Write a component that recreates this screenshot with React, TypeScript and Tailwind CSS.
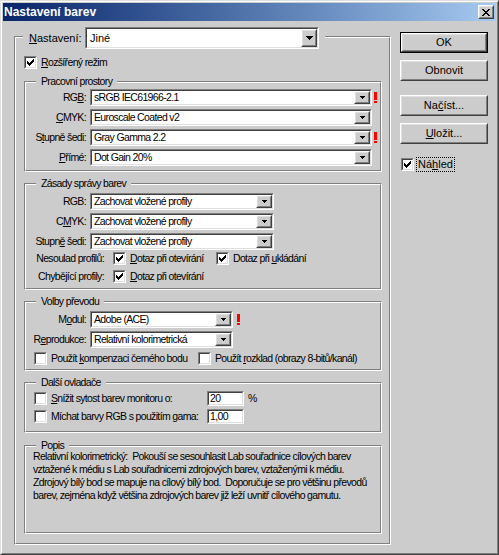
import React from "react";

const NF =
  "font-['Liberation_Sans',Arial,sans-serif] text-[10.5px] leading-[13px] tracking-[-0.65px] text-black";
const AF = "font-['Liberation_Sans',Arial,sans-serif] text-[11px] leading-[13px] text-black";

type P = { className?: string; children?: React.ReactNode };

function Raised({ className = "", children }: P) {
  return (
    <div
      className={`border border-t-white border-l-white border-b-[#404040] border-r-[#404040] bg-[#cccccc] shrink-0 ${className}`}
    >
      <div className="h-full w-full border border-t-[#dfdfdf] border-l-[#dfdfdf] border-b-[#808080] border-r-[#808080] flex items-center justify-center">
        {children}
      </div>
    </div>
  );
}

function Sunken({ className = "", children, inner = "" }: P & { inner?: string }) {
  return (
    <div
      className={`border border-t-[#808080] border-l-[#808080] border-b-white border-r-white shrink-0 ${className}`}
    >
      <div
        className={`h-full w-full border border-t-[#404040] border-l-[#404040] border-b-[#dfdfdf] border-r-[#dfdfdf] bg-white flex items-center ${inner}`}
      >
        {children}
      </div>
    </div>
  );
}

function ArrowSmall() {
  return (
    <svg width="5" height="3" viewBox="0 0 5 3" className="block">
      <path d="M0 0h5v1h-1v1h-1v1h-1v-1h-1v-1h-1z" fill="#000" />
    </svg>
  );
}

function ArrowBig() {
  return (
    <svg width="7" height="4" viewBox="0 0 7 4" className="block">
      <path d="M0 0h7v1h-1v1h-1v1h-1v1h-1v-1h-1v-1h-1v-1h-1z" fill="#000" />
    </svg>
  );
}

function CheckGlyph() {
  return (
    <svg width="7" height="7" viewBox="0 0 7 7" className="block">
      <path
        d="M6 0h1v1h-1z M5 1h2v1h-2z M0 2h1v1h-1z M4 2h3v1h-3z M0 3h2v1h-2z M3 3h3v1h-3z M0 4h5v1h-5z M1 5h3v1h-3z M2 6h1v1h-1z"
        fill="#000"
      />
    </svg>
  );
}

function CloseGlyph() {
  return (
    <svg width="8" height="7" viewBox="0 0 8 7" className="block">
      <path
        d="M0 0h2v1h-2z M6 0h2v1h-2z M1 1h2v1h-2z M5 1h2v1h-2z M2 2h4v1h-4z M3 3h2v1h-2z M2 4h4v1h-4z M1 5h2v1h-2z M5 5h2v1h-2z M0 6h2v1h-2z M6 6h2v1h-2z"
        fill="#000"
      />
    </svg>
  );
}

function Check({ checked = false }: { checked?: boolean }) {
  return (
    <Sunken className="w-[13px] h-[13px]" inner="justify-center">
      {checked && <CheckGlyph />}
    </Sunken>
  );
}

function Combo({ className = "", text }: { className?: string; text: string }) {
  return (
    <Sunken className={className}>
      <div className={`${NF} flex-1 pl-[2px] whitespace-nowrap overflow-hidden`}>{text}</div>
      <Raised className="w-[16px] h-full">
        <ArrowSmall />
      </Raised>
    </Sunken>
  );
}

function Warn({ className = "" }: { className?: string }) {
  return (
    <div className={`flex flex-col w-[3px] shrink-0 ${className}`}>
      <div className="h-[8px] w-[3px] bg-[#ff0000]" />
      <div className="h-[1px]" />
      <div className="h-[2px] w-[3px] bg-[#ff0000]" />
    </div>
  );
}

function Group({
  label,
  className = "",
  inner = "",
  children,
}: P & { label: string; inner?: string }) {
  return (
    <div
      className={`relative shrink-0 border border-t-[#808080] border-l-[#808080] border-b-white border-r-white ${className}`}
    >
      <div
        className={`h-full w-full border border-t-white border-l-white border-b-[#808080] border-r-[#808080] ${inner}`}
      >
        {children}
      </div>
      <div className={`${NF} absolute top-[-7px] left-[11px] px-[5px] bg-[#cccccc] whitespace-nowrap`}>
        {label}
      </div>
    </div>
  );
}

function Button({ children, def = false, className = "" }: P & { def?: boolean }) {
  if (def) {
    return (
      <div className={`border border-black w-[88px] h-[21px] shrink-0 ${className}`}>
        <Raised className="w-full h-full">
          <span className={AF}>{children}</span>
        </Raised>
      </div>
    );
  }
  return (
    <Raised className={`w-[88px] h-[21px] ${className}`}>
      <span className={AF}>{children}</span>
    </Raised>
  );
}

function ComboRow({
  label,
  text,
  combo,
  warn,
  warnClass = "",
}: {
  label: React.ReactNode;
  text: string;
  combo: string;
  warn?: boolean;
  warnClass?: string;
}) {
  return (
    <div className="flex items-center h-[17px]">
      <div className={`${NF} w-[60px] text-right whitespace-nowrap`}>{label}</div>
      <Combo className={`ml-[4px] h-[17px] ${combo}`} text={text} />
      {warn && <Warn className={warnClass} />}
    </div>
  );
}

function CheckLabel({ checked, children, className = "" }: P & { checked?: boolean }) {
  return (
    <div className={`flex items-center shrink-0 ${className}`}>
      <Check checked={checked} />
      <div className={`${NF} ml-[4px] whitespace-nowrap`}>{children}</div>
    </div>
  );
}

export default function App() {
  return (
    <div className="w-[499px] h-[555px] bg-[#cccccc] border border-t-[#dfdfdf] border-l-[#dfdfdf] border-b-[#404040] border-r-[#404040] overflow-hidden">
      <div className="h-full w-full border border-t-white border-l-white border-b-[#808080] border-r-[#808080] p-[1px] flex flex-col">
        {/* Title bar */}
        <div className="h-[18px] shrink-0 bg-linear-to-r from-[#0a246a] to-[#a6caf0] flex items-center pl-[1px] pr-[2px]">
          <span className="font-['Liberation_Sans',Arial,sans-serif] font-bold text-[12px] leading-[14px] text-white flex-1">
            Nastavení barev
          </span>
          <Raised className="w-[16px] h-[14px]">
            <CloseGlyph />
          </Raised>
        </div>

        {/* Body */}
        <div className="flex flex-1">
          {/* Outer group: Nastavení */}
          <div className="relative ml-[11px] mt-[15px] w-[377px] h-[509px] shrink-0 border border-t-[#808080] border-l-[#808080] border-b-white border-r-white">
            <div className="h-full w-full border border-t-white border-l-white border-b-[#808080] border-r-[#808080] flex flex-col pl-[8px] pr-[7px] pt-[18px]">
              <div className="flex items-center h-[13px]">
                <CheckLabel checked>
                  <u>R</u>ozšířený režim
                </CheckLabel>
              </div>

              {/* Pracovní prostory */}
              <Group label="Pracovní prostory" className="mt-[12px] h-[91px]" inner="flex flex-col gap-[3px] pt-[6px]">
                <ComboRow
                  label={
                    <>
                      RG<u>B</u>:
                    </>
                  }
                  text="sRGB IEC61966-2.1"
                  combo="w-[282px]"
                  warn
                  warnClass="ml-[2px]"
                />
                <ComboRow
                  label={
                    <>
                      <u>C</u>MYK:
                    </>
                  }
                  text="Euroscale Coated v2"
                  combo="w-[282px]"
                />
                <ComboRow
                  label={
                    <>
                      S<u>t</u>upně šedi:
                    </>
                  }
                  text="Gray Gamma 2.2"
                  combo="w-[282px]"
                  warn
                  warnClass="ml-[2px]"
                />
                <ComboRow
                  label={
                    <>
                      <u>P</u>římé:
                    </>
                  }
                  text="Dot Gain 20%"
                  combo="w-[282px]"
                />
              </Group>

              {/* Zásady správy barev */}
              <Group label="Zásady správy barev" className="mt-[11px] h-[107px]" inner="flex flex-col pt-[8px]">
                <div className="flex flex-col gap-[3px]">
                  <ComboRow label="RGB:" text="Zachovat vložené profily" combo="w-[184px]" />
                  <ComboRow
                    label={
                      <>
                        C<u>M</u>YK:
                      </>
                    }
                    text="Zachovat vložené profily"
                    combo="w-[184px]"
                  />
                  <ComboRow
                    label={
                      <>
                        Stupn<u>ě</u> šedi:
                      </>
                    }
                    text="Zachovat vložené profily"
                    combo="w-[184px]"
                  />
                </div>
                <div className="flex items-center h-[13px] mt-[2px]">
                  <div className={`${NF} w-[78px] text-right whitespace-nowrap`}>Nesoulad profilů:</div>
                  <CheckLabel checked className="ml-[9px] w-[103px]">
                    <u>D</u>otaz při otevírání
                  </CheckLabel>
                  <CheckLabel checked>
                    Dotaz při <u>u</u>kládání
                  </CheckLabel>
                </div>
                <div className="flex items-center h-[13px] mt-[5px]">
                  <div className={`${NF} w-[78px] text-right whitespace-nowrap`}>Chybějící profily:</div>
                  <CheckLabel checked className="ml-[9px]">
                    <u>D</u>otaz při otevírání
                  </CheckLabel>
                </div>
              </Group>

              {/* Volby převodu */}
              <Group label="Volby převodu" className="mt-[11px] h-[70px]" inner="flex flex-col pt-[8px]">
                <div className="flex flex-col gap-[3px]">
                  <ComboRow
                    label={
                      <>
                        M<u>o</u>dul:
                      </>
                    }
                    text="Adobe (ACE)"
                    combo="w-[143px]"
                    warn
                    warnClass="ml-[4px]"
                  />
                  <ComboRow
                    label={
                      <>
                        R<u>e</u>produkce:
                      </>
                    }
                    text="Relativní kolorimetrická"
                    combo="w-[143px]"
                  />
                </div>
                <div className="flex items-center h-[13px] mt-[4px] pl-[8px]">
                  <CheckLabel className="w-[164px]">
                    Použít <u>k</u>ompenzaci černého bodu
                  </CheckLabel>
                  <CheckLabel>
                    Použít <u>r</u>ozklad (obrazy 8-bitů/kanál)
                  </CheckLabel>
                </div>
              </Group>

              {/* Další ovladače */}
              <Group label="Další ovladače" className="mt-[11px] h-[51px]" inner="flex flex-col gap-[3px] pt-[7px] pl-[8px]">
                <div className="flex items-center h-[15px]">
                  <CheckLabel className="w-[173px]">
                    <u>S</u>nížit sytost barev monitoru o:
                  </CheckLabel>
                  <Sunken className="w-[37px] h-[15px]">
                    <span className={`${NF} pl-[1px]`}>20</span>
                  </Sunken>
                  <span className={`${NF} ml-[4px]`}>%</span>
                </div>
                <div className="flex items-center h-[15px]">
                  <CheckLabel className="w-[173px]">Míchat barvy RGB s použitím gama:</CheckLabel>
                  <Sunken className="w-[37px] h-[15px]">
                    <span className={`${NF} pl-[1px]`}>1,00</span>
                  </Sunken>
                </div>
              </Group>

              {/* Popis */}
              <Group label="Popis" className="mt-[12px] h-[89px]" inner="pt-[3px] pl-[7px]">
                <div className={`${NF} whitespace-pre`}>
                  <div>Relativní kolorimetrický:  Pokouší se sesouhlasit Lab souřadnice cílových barev</div>
                  <div>vztažené k médiu s Lab souřadnicemi zdrojových barev, vztaženými k médiu.</div>
                  <div>Zdrojový bílý bod se mapuje na cílový bílý bod.  Doporučuje se pro většinu převodů</div>
                  <div>barev, zejména když většina zdrojových barev již leží uvnitř cílového gamutu.</div>
                </div>
              </Group>
            </div>

            {/* Legend with combo */}
            <div className="absolute top-[-10px] left-[8px] h-[22px] flex items-center px-[6px] bg-[#cccccc]">
              <div className={`${AF} w-[52px] whitespace-nowrap`}>
                <u>N</u>astavení:
              </div>
              <Sunken className="ml-[4px] w-[234px] h-[22px]">
                <div className={`${AF} flex-1 pl-[3px]`}>Jiné</div>
                <Raised className="w-[16px] h-full">
                  <ArrowBig />
                </Raised>
              </Sunken>
            </div>
          </div>

          {/* Right column */}
          <div className="ml-[9px] mt-[11px] w-[88px] flex flex-col">
            <Button def>OK</Button>
            <Button className="mt-[7px]">Obnovit</Button>
            <Button className="mt-[14px]">
              Na<u>č</u>íst...
            </Button>
            <Button className="mt-[7px]">
              <u>U</u>ložit...
            </Button>
            <div className="flex items-center mt-[13px] pl-[1px]">
              <Check checked />
              <div className={`${AF} ml-[2px] border border-dotted border-black px-[1px] leading-[12px]`}>
                Ná<u>h</u>led
              </div>
            </div>
          </div>
        </div>
      </div>
    </div>
  );
}
